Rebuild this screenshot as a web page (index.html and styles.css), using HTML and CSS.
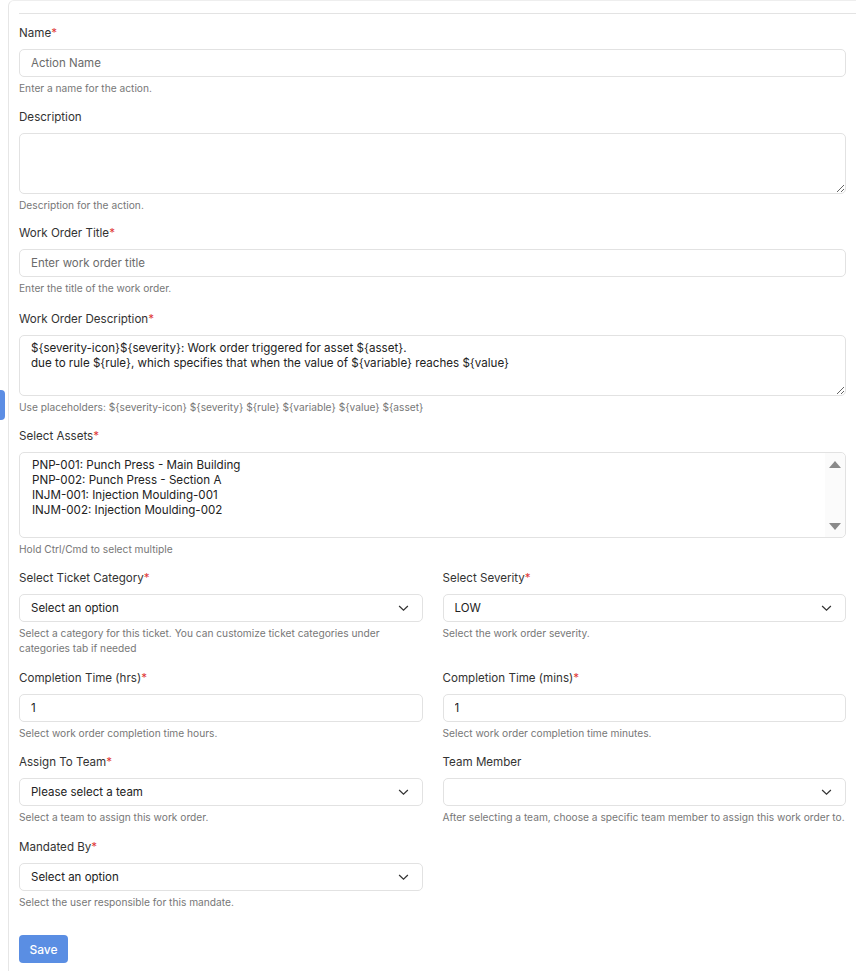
FILE: index.html
```html
<!DOCTYPE html>
<html>
<head>
<meta charset="utf-8">
<link rel="stylesheet" href="styles.css">
</head>
<body>
<div class="side-tab"></div>
<div class="card">
  <div class="tabline"></div>
  <form class="form">
    <div class="field">
      <label class="label">Name<span class="req">*</span></label>
      <input class="input" type="text" placeholder="Action Name">
      <div class="help">Enter a name for the action.</div>
    </div>
    <div class="field gap-sm">
      <label class="label">Description</label>
      <textarea class="textarea"></textarea>
      <div class="help">Description for the action.</div>
    </div>
    <div class="field gap-lg">
      <label class="label">Work Order Title<span class="req">*</span></label>
      <input class="input" type="text" placeholder="Enter work order title">
      <div class="help">Enter the title of the work order.</div>
    </div>
    <div class="field">
      <label class="label">Work Order Description<span class="req">*</span></label>
      <textarea class="textarea filled">${severity-icon}${severity}: Work order triggered for asset ${asset}.
due to rule ${rule}, which specifies that when the value of ${variable} reaches ${value}</textarea>
      <div class="help">Use placeholders: ${severity-icon} ${severity} ${rule} ${variable} ${value} ${asset}</div>
    </div>
    <div class="field">
      <label class="label">Select Assets<span class="req">*</span></label>
      <div class="multi">
        <div class="options">
          <div class="opt">PNP-001: Punch Press - Main Building</div>
          <div class="opt">PNP-002: Punch Press - Section A</div>
          <div class="opt">INJM-001: Injection Moulding-001</div>
          <div class="opt">INJM-002: Injection Moulding-002</div>
        </div>
        <div class="scrollbar">
          <span class="tri up"></span>
          <span class="tri down"></span>
        </div>
      </div>
      <div class="help">Hold Ctrl/Cmd to select multiple</div>
    </div>
    <div class="grid">
      <div class="field gap-md">
        <label class="label">Select Ticket Category<span class="req">*</span></label>
        <div class="select"><span>Select an option</span><svg class="chev" viewBox="0 0 12 8" width="11" height="7"><path d="M1 1.2 L6 6 L11 1.2" fill="none" stroke="#333" stroke-width="1.4"/></svg></div>
        <div class="help">Select a category for this ticket. You can customize ticket categories under categories tab if needed</div>
      </div>
      <div class="field gap-md">
        <label class="label">Select Severity<span class="req">*</span></label>
        <div class="select"><span>LOW</span><svg class="chev" viewBox="0 0 12 8" width="11" height="7"><path d="M1 1.2 L6 6 L11 1.2" fill="none" stroke="#333" stroke-width="1.4"/></svg></div>
        <div class="help">Select the work order severity.</div>
      </div>
      <div class="field">
        <label class="label">Completion Time (hrs)<span class="req">*</span></label>
        <input class="input val" type="text" value="1">
        <div class="help">Select work order completion time hours.</div>
      </div>
      <div class="field">
        <label class="label">Completion Time (mins)<span class="req">*</span></label>
        <input class="input val" type="text" value="1">
        <div class="help">Select work order completion time minutes.</div>
      </div>
      <div class="field gap-md">
        <label class="label">Assign To Team<span class="req">*</span></label>
        <div class="select"><span>Please select a team</span><svg class="chev" viewBox="0 0 12 8" width="11" height="7"><path d="M1 1.2 L6 6 L11 1.2" fill="none" stroke="#333" stroke-width="1.4"/></svg></div>
        <div class="help">Select a team to assign this work order.</div>
      </div>
      <div class="field gap-md">
        <label class="label">Team Member</label>
        <div class="select"><span></span><svg class="chev" viewBox="0 0 12 8" width="11" height="7"><path d="M1 1.2 L6 6 L11 1.2" fill="none" stroke="#333" stroke-width="1.4"/></svg></div>
        <div class="help">After selecting a team, choose a specific team member to assign this work order to.</div>
      </div>
      <div class="field">
        <label class="label">Mandated By<span class="req">*</span></label>
        <div class="select"><span>Select an option</span><svg class="chev" viewBox="0 0 12 8" width="11" height="7"><path d="M1 1.2 L6 6 L11 1.2" fill="none" stroke="#333" stroke-width="1.4"/></svg></div>
        <div class="help">Select the user responsible for this mandate.</div>
      </div>
    </div>
    <div class="actions">
      <button type="button" class="btn">Save</button>
    </div>
  </form>
</div>
</body>
</html>
```
FILE: styles.css
```css
* { box-sizing: border-box; }
html, body { margin: 0; padding: 0; background: #fff; }
body {
  font-family: Inter, "Noto Sans", "Liberation Sans", sans-serif;
  color: #333;
  position: relative;
  min-height: 971px;
  overflow: hidden;
}
.side-tab {
  position: absolute;
  left: 0;
  top: 390px;
  width: 5px;
  height: 30px;
  background: #5b8de4;
  border-radius: 0 4px 4px 0;
}
.card {
  margin-left: 8px;
  border-left: 1px solid #e6e6e6;
  border-top: 1px solid #eeeeee;
  border-top-left-radius: 6px;
  padding: 0 10px 40px 10px;
  min-height: 971px;
}
.tabline {
  height: 13px;
  border-bottom: 1px solid #e3e3e3;
  margin-right: -10px;
}
.form {
  padding-top: 10px;
}
.field {
  display: flex;
  flex-direction: column;
  margin-bottom: 12px;
}
.field.gap-sm { margin-bottom: 11px; }
.field.gap-md { margin-bottom: 13px; }
.field.gap-lg { margin-bottom: 14px; }
.label {
  font-size: 11.6px;
  line-height: 18px;
  color: #333;
  margin-bottom: 7px;
}
.req { color: #e03a3a; }
.input, .textarea, .select, .multi {
  width: 100%;
  border: 1px solid #e2e2e2;
  border-radius: 5px;
  background: #fff;
  font-family: Inter, "Noto Sans", "Liberation Sans", sans-serif;
  font-size: 11.5px;
  color: #222;
  outline: none;
}
.input {
  height: 28px;
  padding: 0 11px;
}
.input::placeholder { color: #6b6b6b; }
.textarea {
  height: 61px;
  padding: 5px 11px;
  line-height: 15px;
  font-size: 11.6px;
  resize: vertical;
  display: block;
}
.select {
  height: 28px;
  padding: 0 13px 0 11px;
  display: flex;
  align-items: center;
  justify-content: space-between;
  color: #222;
}
.chev { display: block; }
.multi {
  height: 86px;
  display: flex;
  justify-content: space-between;
}
.options {
  padding: 5px 12px;
  line-height: 15px;
  font-size: 11.6px;
}
.scrollbar {
  width: 20px;
  background: #fbfbfb;
  display: flex;
  flex-direction: column;
  justify-content: space-between;
  align-items: center;
  padding: 8px 0 7px;
  border-radius: 0 5px 5px 0;
}
.tri {
  width: 0;
  height: 0;
  border-left: 6px solid transparent;
  border-right: 6px solid transparent;
}
.tri.up { border-bottom: 7px solid #8a8a8a; }
.tri.down { border-top: 7px solid #8a8a8a; }
.help {
  font-size: 10.2px;
  line-height: 15px;
  color: #777;
  margin-top: 4px;
}
.grid {
  display: grid;
  grid-template-columns: 1fr 1fr;
  column-gap: 20px;
}
.actions { padding-top: 13px; }
.btn {
  height: 28px;
  width: 49px;
  border: none;
  border-radius: 4px;
  background: #5a8ee3;
  color: #fff;
  font-family: Inter, "Noto Sans", "Liberation Sans", sans-serif;
  font-size: 12px;
  font-weight: 500;
  padding: 0;
}
```
